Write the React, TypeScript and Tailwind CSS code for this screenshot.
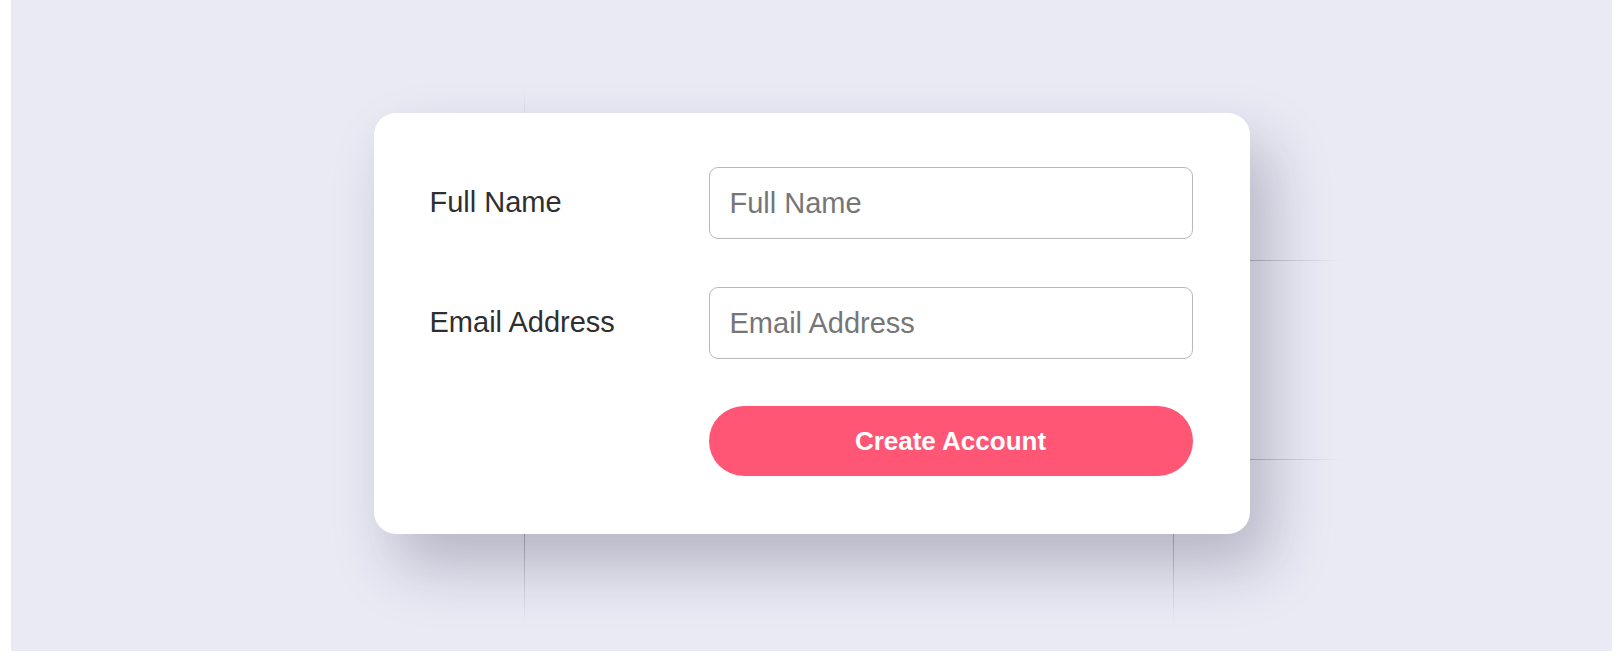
export default function App() {
  return (
    <div className="min-h-screen bg-white font-['Liberation_Sans',Arial,sans-serif]">
      <div className="relative ml-[11px] flex h-[651px] w-[1601px] items-center justify-center bg-[#eaeaf5]">
        <div className="absolute left-[513px] top-[88px] h-[26px] w-px bg-gradient-to-b from-transparent to-[#dcdce8]" />
        <div className="absolute left-[513px] top-[534px] h-[90px] w-px bg-gradient-to-b from-[#aeaeba] to-transparent" />
        <div className="absolute left-[1162px] top-[534px] h-[90px] w-px bg-gradient-to-b from-[#aeaeba] to-transparent" />
        <div className="absolute left-[1238px] top-[260px] h-px w-[95px] bg-gradient-to-r from-[#b3b4c0] to-transparent" />
        <div className="absolute left-[1238px] top-[459px] h-px w-[95px] bg-gradient-to-r from-[#b3b4c0] to-transparent" />

        <form className="relative z-10 mt-[-4px] w-[876px] rounded-[22px] bg-white pb-[58px] pl-[56px] pr-[57px] pt-[54px] shadow-[20px_32px_60px_rgba(40,40,70,0.27)]">
          <div className="flex items-center">
            <label className="w-[279px] text-[29px] text-[#2f2f2f]">Full Name</label>
            <input
              placeholder="Full Name"
              className="h-[72px] flex-1 rounded-[9px] border border-[#b9b9b9] bg-white px-[20px] text-[29px] text-[#333] outline-none placeholder:text-[#767676]"
            />
          </div>
          <div className="mt-[48px] flex items-center">
            <label className="w-[279px] text-[29px] text-[#2f2f2f]">Email Address</label>
            <input
              placeholder="Email Address"
              className="h-[72px] flex-1 rounded-[9px] border border-[#b9b9b9] bg-white px-[20px] text-[29px] text-[#333] outline-none placeholder:text-[#767676]"
            />
          </div>
          <div className="mt-[47px] flex">
            <div className="w-[279px]" />
            <button
              type="button"
              className="h-[70px] flex-1 rounded-full bg-[#ff5676] text-[26px] font-bold text-white"
            >
              Create Account
            </button>
          </div>
        </form>
      </div>
    </div>
  )
}
